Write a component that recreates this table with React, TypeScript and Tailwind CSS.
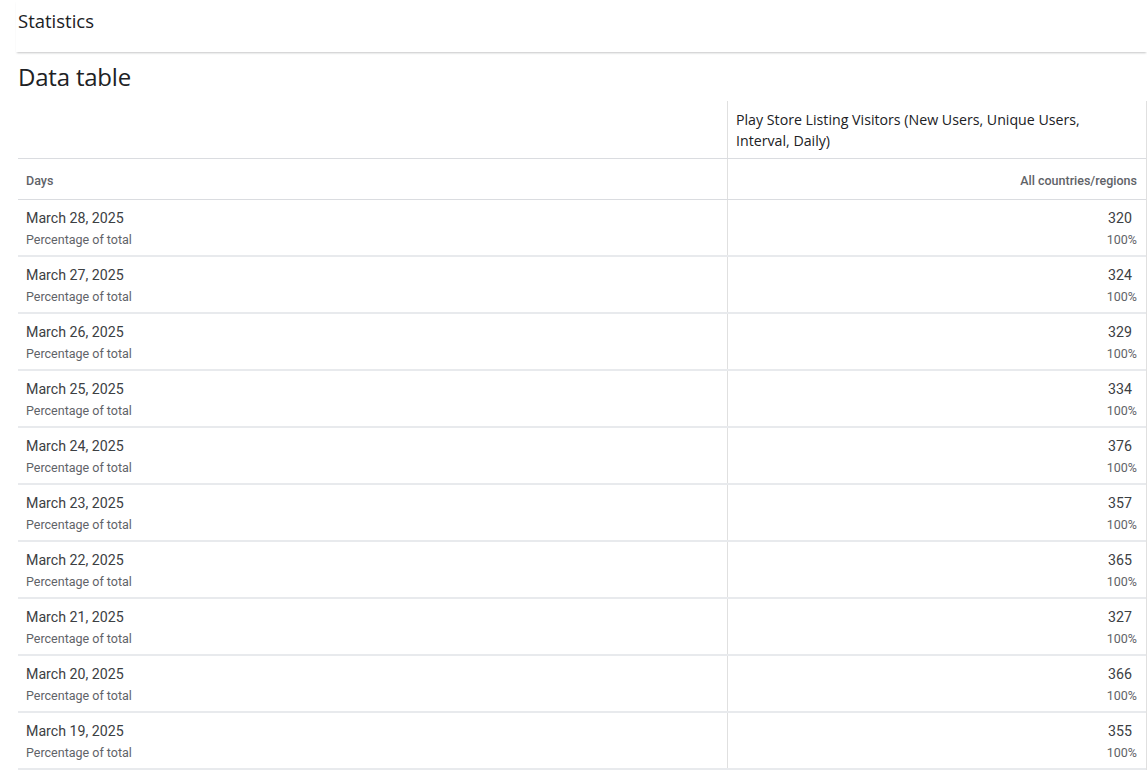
const rows = [
  { day: 'March 28, 2025', value: 320 },
  { day: 'March 27, 2025', value: 324 },
  { day: 'March 26, 2025', value: 329 },
  { day: 'March 25, 2025', value: 334 },
  { day: 'March 24, 2025', value: 376 },
  { day: 'March 23, 2025', value: 357 },
  { day: 'March 22, 2025', value: 365 },
  { day: 'March 21, 2025', value: 327 },
  { day: 'March 20, 2025', value: 366 },
  { day: 'March 19, 2025', value: 355 },
];

export default function App() {
  return (
    <div className="min-h-screen bg-white font-['Roboto',sans-serif] text-[#3c4043]">
      {/* Top bar */}
      <div className="h-[52px] ml-[16px] pt-[8px] shadow-[0_2px_2px_-1px_rgba(60,64,67,0.3)]">
        <span className="ml-[2px] text-[18.5px] leading-[26px] text-[#202124] font-['Open_Sans',sans-serif] font-medium">
          Statistics
        </span>
      </div>

      <div className="pl-[18px]">
        <h1 className="mt-[10px] h-[39px] text-[24px] leading-[30px] text-[#202124] font-['Open_Sans',sans-serif] font-medium tracking-[-0.2px]">
          Data table
        </h1>

        <div className="border-r border-[#e0e0e0]">
          {/* Header row 1 */}
          <div className="grid grid-cols-[709px_1fr] h-[58px] border-b border-[#dadce0]">
            <div />
            <div className="border-l border-[#e0e0e0] pl-[8px] pt-[8px] text-[14.2px] leading-[21px] text-[#202124] font-['Open_Sans',sans-serif]">
              Play Store Listing Visitors (New Users, Unique Users,
              <br />
              Interval, Daily)
            </div>
          </div>

          {/* Header row 2 */}
          <div className="grid grid-cols-[709px_1fr] h-[41px] border-b border-[#dadce0] text-[12.5px] font-medium text-[#5f6368]">
            <div className="flex items-center pl-[8px] pt-[4px]">Days</div>
            <div className="flex items-center justify-end border-l border-[#e0e0e0] pr-[9px] pt-[4px]">
              All countries/regions
            </div>
          </div>

          {/* Data rows */}
          {rows.map((r) => (
            <div
              key={r.day}
              className="grid grid-cols-[709px_1fr] h-[57px] border-b-2 border-[#e8eaed]"
            >
              <div className="pl-[8px] pt-[9px]">
                <div className="text-[14.2px] leading-[19px] text-[#3c4043]">{r.day}</div>
                <div className="mt-[4px] text-[12.5px] leading-[16px] text-[#5f6368]">Percentage of total</div>
              </div>
              <div className="border-l border-[#e0e0e0] pt-[9px] pr-[9px] text-right">
                <div className="pr-[5px] text-[14.2px] leading-[19px] text-[#3c4043]">{r.value}</div>
                <div className="mt-[4px] text-[12.5px] leading-[16px] text-[#5f6368]">100%</div>
              </div>
            </div>
          ))}
        </div>
      </div>
    </div>
  );
}
